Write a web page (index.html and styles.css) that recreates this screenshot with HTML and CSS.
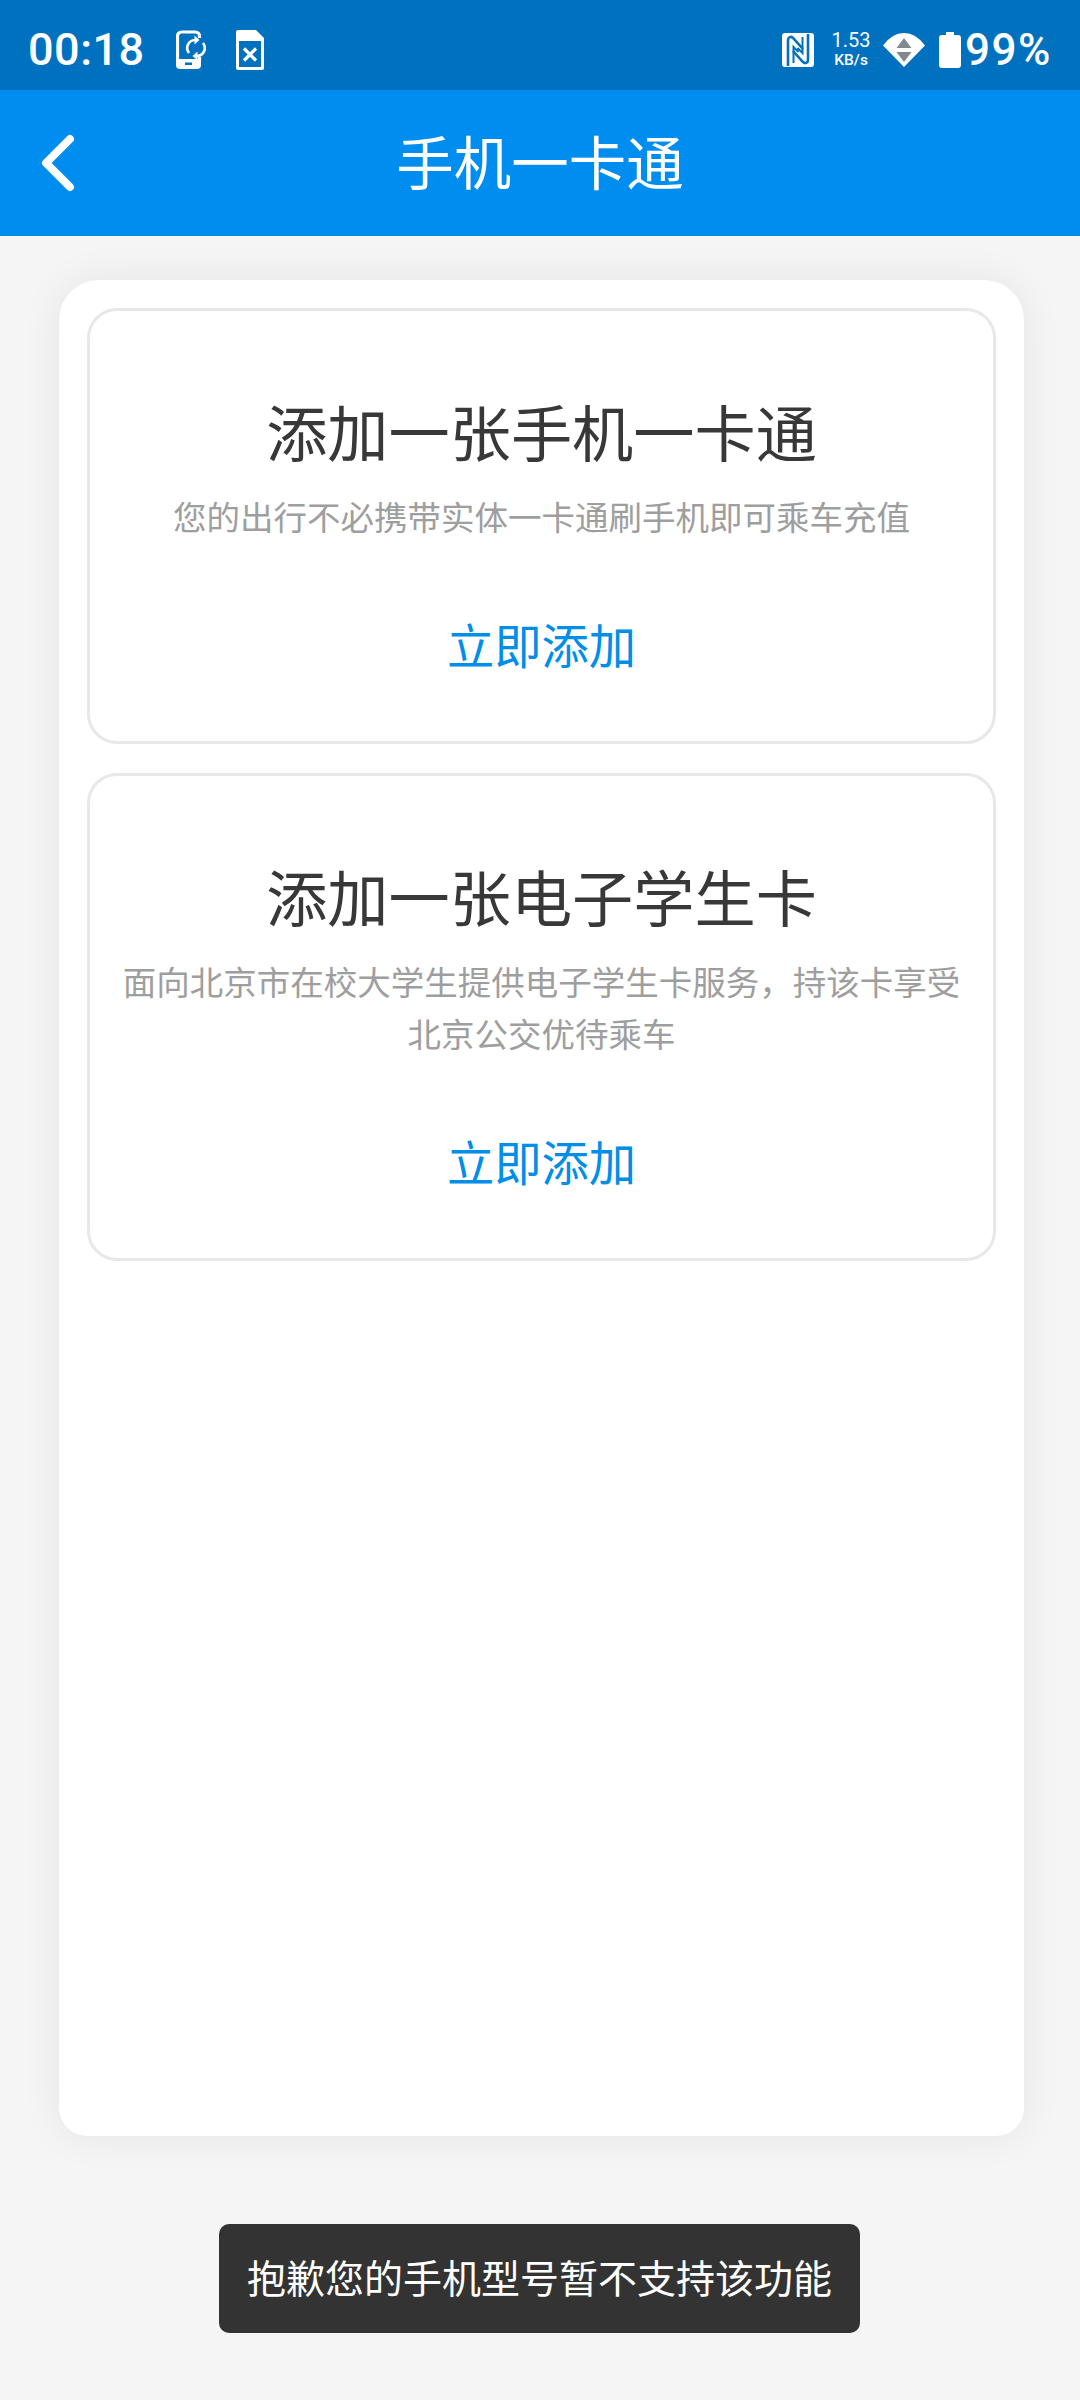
FILE: index.html

```html
<!DOCTYPE html>
<html lang="zh-CN">
<head>
  <meta charset="UTF-8">
  <meta name="viewport" content="width=device-width, initial-scale=1.0">
  <title>手机一卡通</title>
  <link rel="stylesheet" href="styles.css">
</head>
<body>

<div class="status-bar">
  <div class="status-left">
    <span class="clock">00:18</span>
    <svg class="ic-phone" width="30" height="40" viewBox="0 0 30 40">
      <path fill="none" stroke="#fff" stroke-width="3.200" d="M23.500 8V6a4 4 0 0 0-4-4H5.500a4 4 0 0 0-4 4v24M23.500 27v4"/>
      <path fill="#fff" d="M0 29h25v6a4 4 0 0 1-4 4H4a4 4 0 0 1-4-4z"/>
      <rect x="9" y="32.500" width="7" height="2.500" fill="#0071bf"/>
      <path fill="none" stroke="#fff" stroke-width="2.600" d="M13 23a8 8 0 0 1 6-13M27 13a8 8 0 0 1-6 13"/>
      <path fill="#fff" d="M18.500 5.500l5 4.500-5 4.500zM21.500 21.500l-5 4.500 5 4.500z"/>
    </svg>
    <svg class="ic-sim" width="28" height="40" viewBox="0 0 28 40">
      <path fill="#fff" fill-rule="evenodd" d="M2 0h18l8 8v30a2 2 0 0 1-2 2H2a2 2 0 0 1-2-2V2a2 2 0 0 1 2-2zM3 11v26h22V11z"/>
      <path stroke="#fff" stroke-width="3.200" d="M8 18.500l12 12M20 18.500l-12 12"/>
    </svg>
  </div>
  <div class="status-right">
    <svg class="ic-nfc" width="32" height="34" viewBox="0 0 32 34">
      <rect width="32" height="34" rx="3" fill="#fff"/>
      <path fill="none" stroke="#0071bf" stroke-width="2.600" d="M6 33V7c0-3 3-4 5-2l10 11"/>
      <path fill="none" stroke="#0071bf" stroke-width="2.600" d="M26 1v26c0 3-3 4-5 2L11 18"/>
      <path fill="none" stroke="#0071bf" stroke-width="2" d="M11.500 30V14l5 5M20.500 4v16l-5-5"/>
    </svg>
    <div class="net-speed">
      <span class="net-num">1.53</span>
      <span class="net-unit">KB/s</span>
    </div>
    <svg class="ic-wifi" width="42" height="34" viewBox="0 0 42 34">
      <path fill="#fff" d="M21 34L0 12.500Q9 0 21 0t21 12.500z"/>
      <path fill="#808a90" d="M21 5l7.500 10h-15zM13.500 19h15L21 29z"/>
    </svg>
    <svg class="ic-battery" width="22" height="36" viewBox="0 0 22 36">
      <path fill="#fff" d="M7 0h8v3h4a3 3 0 0 1 3 3v27a3 3 0 0 1-3 3H3a3 3 0 0 1-3-3V6a3 3 0 0 1 3-3h4z"/>
    </svg>
    <span class="battery-text">99%</span>
  </div>
</div>

<header class="app-bar">
  <svg class="back" width="36" height="60" viewBox="0 0 36 60">
    <path fill="none" stroke="#fff" stroke-width="8" stroke-linecap="round" stroke-linejoin="round" d="M30 6L6 30l24 24"/>
  </svg>
  <h1 class="app-title">手机一卡通</h1>
  <span></span>
</header>

<main class="panel">
  <section class="card">
    <h2 class="card-title">添加一张手机一卡通</h2>
    <p class="card-desc">您的出行不必携带实体一卡通刷手机即可乘车充值</p>
    <a class="card-action">立即添加</a>
  </section>
  <section class="card">
    <h2 class="card-title">添加一张电子学生卡</h2>
    <p class="card-desc">面向北京市在校大学生提供电子学生卡服务，持该卡享受北京公交优待乘车</p>
    <a class="card-action">立即添加</a>
  </section>
</main>

<div class="toast">抱歉您的手机型号暂不支持该功能</div>

</body>
</html>
```

FILE: styles.css

```css
* { box-sizing: border-box; }
body { margin: 0; height: 2400px; position: relative; overflow: hidden; background-color: #f5f5f5; font-family: "Noto Sans CJK SC", "Noto Sans", sans-serif; }

.status-bar { height: 90px; background-color: #0071bf; color: #fff; display: flex; justify-content: space-between; align-items: center; padding: 9px 28px 0 28px; font-family: Roboto, sans-serif; }
.status-left { display: flex; align-items: center; }
.clock { font-size: 45px; font-weight: 500; line-height: 52px; width: 148px; letter-spacing: 0.5px; }
.ic-sim { margin-left: 30px; }
.status-right { display: flex; align-items: center; }
.net-speed { display: flex; flex-direction: column; align-items: center; width: 44px; margin: 0 10px 0 15px; }
.net-num { font-size: 20px; line-height: 20px; }
.net-unit { font-size: 15.500px; line-height: 20px; font-weight: 500; }
.ic-battery { margin-left: 14px; }
.battery-text { font-size: 44px; font-weight: 500; line-height: 50px; margin-left: 4px; letter-spacing: 1.500px; }

.app-bar { height: 146px; background-color: #008df0; display: grid; grid-template-columns: 1fr auto 1fr; align-items: center; }
.back { margin-left: 40px; }
.app-title { margin: 0; padding-bottom: 7px; color: #fff; font-size: 57.500px; font-weight: 400; line-height: 80px; }

.panel { width: 965px; height: 1856px; margin: 44px 0 0 59px; padding: 28px; background-color: #fff; border-radius: 40px 40px 28px 28px; box-shadow: 0 0 40px rgba(0, 0, 0, 0.07); display: flex; flex-direction: column; gap: 29px; }

.card { border: 3px solid #e8e8e8; border-radius: 30px; padding: 80px 20px 67px; text-align: center; }
.card-title { margin: 0 0 19px; color: #383838; font-size: 61.200px; font-weight: 400; line-height: 80px; }
.card-desc { margin: 0 0 72px; color: #9e9e9e; font-size: 33.500px; line-height: 52px; }
.card-action { display: block; color: #008ee8; font-size: 47.300px; line-height: 60px; }

.toast { position: absolute; left: 219px; top: 2224px; padding: 0 28px; height: 109px; line-height: 105px; background-color: #333; color: #fff; font-size: 39px; border-radius: 10px; white-space: nowrap; }
```
